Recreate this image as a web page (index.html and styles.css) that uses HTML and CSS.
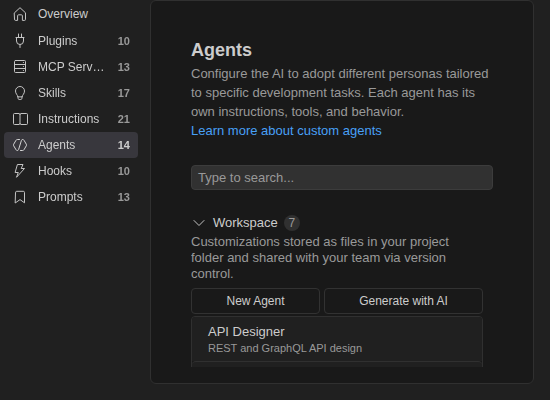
FILE: index.html
```html
<!DOCTYPE html>
<html lang="en">
<head>
<meta charset="utf-8">
<title>Agents</title>
<link rel="stylesheet" href="styles.css">
</head>
<body>
<div class="app">
  <nav class="sidebar">
    <a class="item overview">
      <svg class="icon" viewBox="0 0 16 16"><path d="M2.500 6.800 8 1.700l5.500 5.100v6.700a.9.900 0 0 1-.9.900H10.400V9.800a1 1 0 0 0-1-1H6.600a1 1 0 0 0-1 1v4.600H3.400a.9.900 0 0 1-.9-.9z"/></svg>
      <span class="label">Overview</span>
    </a>
    <div class="list">
      <a class="item">
        <svg class="icon" viewBox="0 0 16 16"><path d="M6.500 1v3M9.500 1v3M4 4.500h8M4.500 4.500v3.500a3.500 3.500 0 0 0 7 0V4.500M8 11.500V14.500"/></svg>
        <span class="label">Plugins</span><span class="count">10</span>
      </a>
      <a class="item">
        <svg class="icon" viewBox="0 0 16 16"><rect x="2.500" y="1.500" width="11" height="12" rx="1"/><path d="M2.500 5.500h11M2.500 9.500h11M11.300 3.500h.2M11.300 7.500h.2M11.300 11.500h.2"/></svg>
        <span class="label">MCP Servers</span><span class="count">13</span>
      </a>
      <a class="item">
        <svg class="icon" viewBox="0 0 16 16"><path d="M5.800 11.500C5.600 9.800 3.500 8.800 3.500 6a4.500 4.500 0 0 1 9 0c0 2.800-2.100 3.800-2.300 5.500zM5.800 11.500l.4 2.200a1 1 0 0 0 1 .8h1.600a1 1 0 0 0 1-.8l.4-2.200"/></svg>
        <span class="label">Skills</span><span class="count">17</span>
      </a>
      <a class="item">
        <svg class="icon" viewBox="0 0 16 16"><path d="M8 3.500a1 1 0 0 0-1-1H2.500a1 1 0 0 0-1 1v9a1 1 0 0 0 1 1H7a1 1 0 0 0 1-1zM8 3.500a1 1 0 0 1 1-1h5.500a1 1 0 0 1 1 1v9a1 1 0 0 1-1 1H9a1 1 0 0 1-1-1"/></svg>
        <span class="label">Instructions</span><span class="count">21</span>
      </a>
      <a class="item selected">
        <svg class="icon" viewBox="0 0 16 16"><path d="M7.500 2.500H5.300a1.500 1.500 0 0 0-1.300.8L1.700 7.200a1.600 1.600 0 0 0 0 1.600L4 12.700a1.500 1.500 0 0 0 1.300.8 1.400 1.400 0 0 0 1.300-1L9.400 3.500a1.400 1.400 0 0 1 1.300-1 1.500 1.500 0 0 1 1.300.8l2.300 3.900a1.600 1.600 0 0 1 0 1.600L12 12.700a1.500 1.500 0 0 1-1.300.8H8.500"/></svg>
        <span class="label">Agents</span><span class="count">14</span>
      </a>
      <a class="item">
        <svg class="icon" viewBox="0 0 16 16"><path d="M5.800 1.500h5.200L9.200 5.500h3.300L4.500 14.300 6.300 9.500H3.500z"/></svg>
        <span class="label">Hooks</span><span class="count">10</span>
      </a>
      <a class="item">
        <svg class="icon" viewBox="0 0 16 16"><path d="M3.500 3.500a1.200 1.200 0 0 1 1.200-1.200h6.600a1.200 1.200 0 0 1 1.200 1.200v10.300L8 10.600l-4.500 3.200z"/></svg>
        <span class="label">Prompts</span><span class="count">13</span>
      </a>
    </div>
  </nav>
  <main class="panel">
    <h1>Agents</h1>
    <p class="intro">Configure the AI to adopt different personas tailored to specific development tasks. Each agent has its own instructions, tools, and behavior.</p>
    <a class="link">Learn more about custom agents</a>
    <div class="search">Type to search...</div>
    <section class="group">
      <div class="group-head">
        <svg class="icon" viewBox="0 0 16 16"><path d="M3 5.500l5 5 5-5"/></svg>
        <span class="title">Workspace</span><span class="badge">7</span>
      </div>
      <p class="group-text">Customizations stored as files in your project folder and shared with your team via version control.</p>
      <div class="actions">
        <button class="new">New Agent</button>
        <button class="generate">Generate with AI</button>
      </div>
      <div class="cards">
        <div class="card">
          <div class="name">API Designer</div>
          <div class="detail">REST and GraphQL API design</div>
        </div>
        <div class="card"></div>
      </div>
    </section>
  </main>
</div>
</body>
</html>
```
FILE: styles.css
```css
* { box-sizing: border-box; }
body {
  margin: 0;
  background: #202020;
  color: #cccccc;
  font: 13px "Liberation Sans", Arial, sans-serif;
  overflow: hidden;
}
.app { display: flex; width: 550px; height: 400px; }
.sidebar { width: 150px; padding: 1px 12px 0 4px; font-size: 12px; }
.list { margin-top: 1px; will-change: transform; }
.item {
  display: flex;
  align-items: center;
  height: 26px;
  padding: 0 8px;
  border-radius: 4px;
}
.icon {
  flex: none;
  width: 16px;
  height: 16px;
  fill: none;
  stroke: #c4c4c4;
  stroke-width: 1;
  stroke-linejoin: round;
  stroke-linecap: round;
}
.label {
  flex: 1;
  min-width: 0;
  margin: 0 10px;
  overflow: hidden;
  text-overflow: ellipsis;
  white-space: nowrap;
}
.count { color: #999999; font-size: 11px; font-weight: bold; }
.selected { background: #38373d; }
.selected .count { color: #cccccc; }
.selected .icon { stroke: #d4d4d4; }
.panel {
  width: 384px;
  height: 384px;
  padding: 39px 40px 0;
  background: #191919;
  border: 1px solid #303030;
  border-radius: 6px;
}
h1 { margin: 0; font-size: 18px; line-height: 20px; }
.intro { margin: 4px 0 0; color: #999999; line-height: 19px; }
.link { display: block; color: #48a0f7; line-height: 19px; }
.search {
  height: 25px;
  margin-top: 25px;
  padding: 0 6px;
  line-height: 23px;
  color: #999999;
  background: #313131;
  border: 1px solid #3c3c3c;
  border-radius: 4px;
}
.group { width: 292px; height: 157px; margin-top: 20px; overflow: hidden; }
.group-head { display: flex; align-items: center; height: 26px; }
.group-head .icon { margin-right: 6px; }
.title { padding-bottom: 2px; }
.badge {
  width: 16px;
  height: 16px;
  margin-left: 6px;
  border-radius: 8px;
  background: #303030;
  color: #999999;
  text-align: center;
  line-height: 16px;
  font-size: 12px;
}
.group-text { margin: -2px 0 0; padding-right: 16px; line-height: 16px; color: #999999; }
.actions { display: flex; gap: 4px; margin-top: 6px; }
button {
  height: 26px;
  padding: 0;
  font: 12px "Liberation Sans", Arial, sans-serif;
  color: #cccccc;
  background: transparent;
  border: 1px solid #323232;
  border-radius: 4px;
}
.new { width: 129px; }
.generate { width: 159px; }
.cards {
  margin-top: 2px;
  border: 1px solid #303030;
  border-radius: 4px;
  overflow: hidden;
}
.card { height: 44px; padding: 6px 16px 0; background: #202020; }
.card + .card {
  border: 1px solid #303030;
  border-width: 1px 0 0;
  border-radius: 4px 4px 0 0;
}
.name { line-height: 18px; }
.detail { font-size: 11px; line-height: 14px; color: #999999; }
```
